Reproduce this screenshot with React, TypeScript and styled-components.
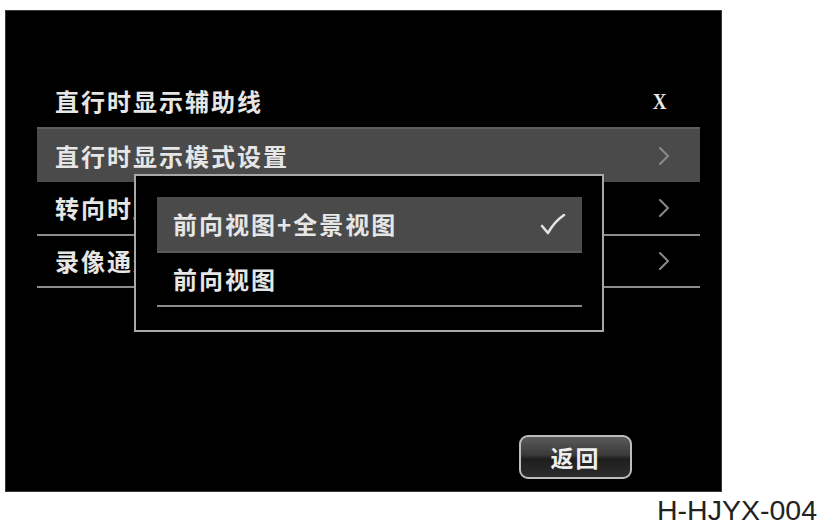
import styled, { createGlobalStyle } from 'styled-components';

const GlobalStyle = createGlobalStyle`
  html, body {
    margin: 0;
    padding: 0;
    background: #ffffff;
  }
  body {
    font-family: "Noto Sans CJK SC", "Noto Sans", sans-serif;
  }
`;

type MenuItem = {
  label: string;
  kind: 'toggle' | 'link';
  value?: string;
  active?: boolean;
};

const menuItems: MenuItem[] = [
  { label: '直行时显示辅助线', kind: 'toggle', value: 'X' },
  { label: '直行时显示模式设置', kind: 'link', active: true },
  { label: '转向时显示模式设置', kind: 'link' },
  { label: '录像通道设置', kind: 'link' },
];

const modeOptions = [
  { label: '前向视图+全景视图', checked: true },
  { label: '前向视图', checked: false },
];

function Chevron() {
  return (
    <svg width="12" height="20" viewBox="0 0 12 20">
      <polyline
        points="2,2 10,10 2,18"
        fill="none"
        stroke="#8a8a8a"
        strokeWidth="2"
        strokeLinecap="round"
        strokeLinejoin="round"
      />
    </svg>
  );
}

function Check() {
  return (
    <svg width="26" height="22" viewBox="0 0 26 22">
      <path
        d="M2 13 L8 20 Q14 9 24 2"
        fill="none"
        stroke="#e4e4e4"
        strokeWidth="2.6"
        strokeLinecap="round"
        strokeLinejoin="round"
      />
    </svg>
  );
}

export default function App() {
  return (
    <>
      <GlobalStyle />
      <Page>
        <Screen>
          <List>
            {menuItems.map(item => (
              <Row key={item.label} active={!!item.active} divided={item.kind === 'link' && !item.active}>
                <Label>{item.label}</Label>
                {item.kind === 'toggle' ? <ToggleMark>{item.value}</ToggleMark> : <Chevron />}
              </Row>
            ))}
            <Popup>
              {modeOptions.map(opt => (
                <OptionRow key={opt.label} selected={opt.checked}>
                  <Label>{opt.label}</Label>
                  {opt.checked && <Check />}
                </OptionRow>
              ))}
            </Popup>
          </List>
          <Footer>
            <BackButton>返回</BackButton>
          </Footer>
        </Screen>
        <Caption>H-HJYX-004</Caption>
      </Page>
    </>
  );
}

const Page = styled.div`
  width: 823px;
  height: 528px;
  padding: 10px 6px 0 5px;
  box-sizing: border-box;
  display: flex;
  flex-direction: column;
`;

const Screen = styled.div`
  width: 717px;
  height: 482px;
  box-sizing: border-box;
  background: #000;
  border: 1px solid #3a3a3a;
  padding: 64px 21px 12px 31px;
  display: flex;
  flex-direction: column;
`;

const List = styled.div`
  position: relative;
  display: flex;
  flex-direction: column;
  flex: 1;
`;

const Row = styled.div<{ active: boolean; divided: boolean }>`
  height: ${p => (p.active ? 55 : 52)}px;
  box-sizing: border-box;
  display: flex;
  align-items: center;
  justify-content: space-between;
  padding: 0 30px 0 18px;
  background: ${p => (p.active ? '#4a4a4a' : 'transparent')};
  border-top: ${p => (p.active ? '2px solid #5e5e5e' : 'none')};
  border-bottom: ${p => (p.divided ? '2px solid #8c8c8c' : 'none')};
  &:nth-child(3) {
    height: 54px;
  }
`;

const Label = styled.span`
  color: #e6e6e6;
  font-size: 24px;
  font-weight: 700;
  letter-spacing: 2px;
  line-height: 1;
  white-space: nowrap;
`;

const ToggleMark = styled.span`
  color: #e8e8e8;
  font-family: "Liberation Serif", "DejaVu Serif", serif;
  font-weight: 700;
  font-size: 24px;
  line-height: 1;
  margin-right: 2px;
  transform: scaleX(0.8);
`;

const Popup = styled.div`
  position: absolute;
  left: 97px;
  top: 99px;
  width: 470px;
  height: 158px;
  box-sizing: border-box;
  background: #000;
  border: 2px solid #a8a8a8;
  padding: 21px 20px 0 21px;
  display: flex;
  flex-direction: column;
`;

const OptionRow = styled.div<{ selected: boolean }>`
  height: ${p => (p.selected ? 56 : 54)}px;
  box-sizing: border-box;
  display: flex;
  align-items: center;
  justify-content: space-between;
  padding: 0 16px 0 16px;
  background: ${p => (p.selected ? '#4a4a4a' : 'transparent')};
  border-bottom: ${p => (p.selected ? '2px solid #5a5a5a' : '2px solid #8c8c8c')};
`;

const Footer = styled.div`
  display: flex;
  justify-content: flex-end;
  padding-right: 68px;
`;

const BackButton = styled.button`
  width: 113px;
  height: 44px;
  box-sizing: border-box;
  border: 2px solid #bdbdbd;
  border-radius: 9px;
  background: linear-gradient(#5a5a5a 0%, #3a3a3a 45%, #1e1e1e 55%, #2c2c2c 100%);
  color: #eeeeee;
  font-family: "Noto Sans CJK SC", sans-serif;
  font-weight: 700;
  font-size: 23px;
  letter-spacing: 2px;
  line-height: 1;
  padding: 0;
  display: flex;
  align-items: center;
  justify-content: center;
`;

const Caption = styled.div`
  align-self: flex-end;
  margin-top: 3px;
  color: #222;
  font-family: "Liberation Sans", Arial, sans-serif;
  font-size: 28.5px;
  line-height: 30px;
`;
